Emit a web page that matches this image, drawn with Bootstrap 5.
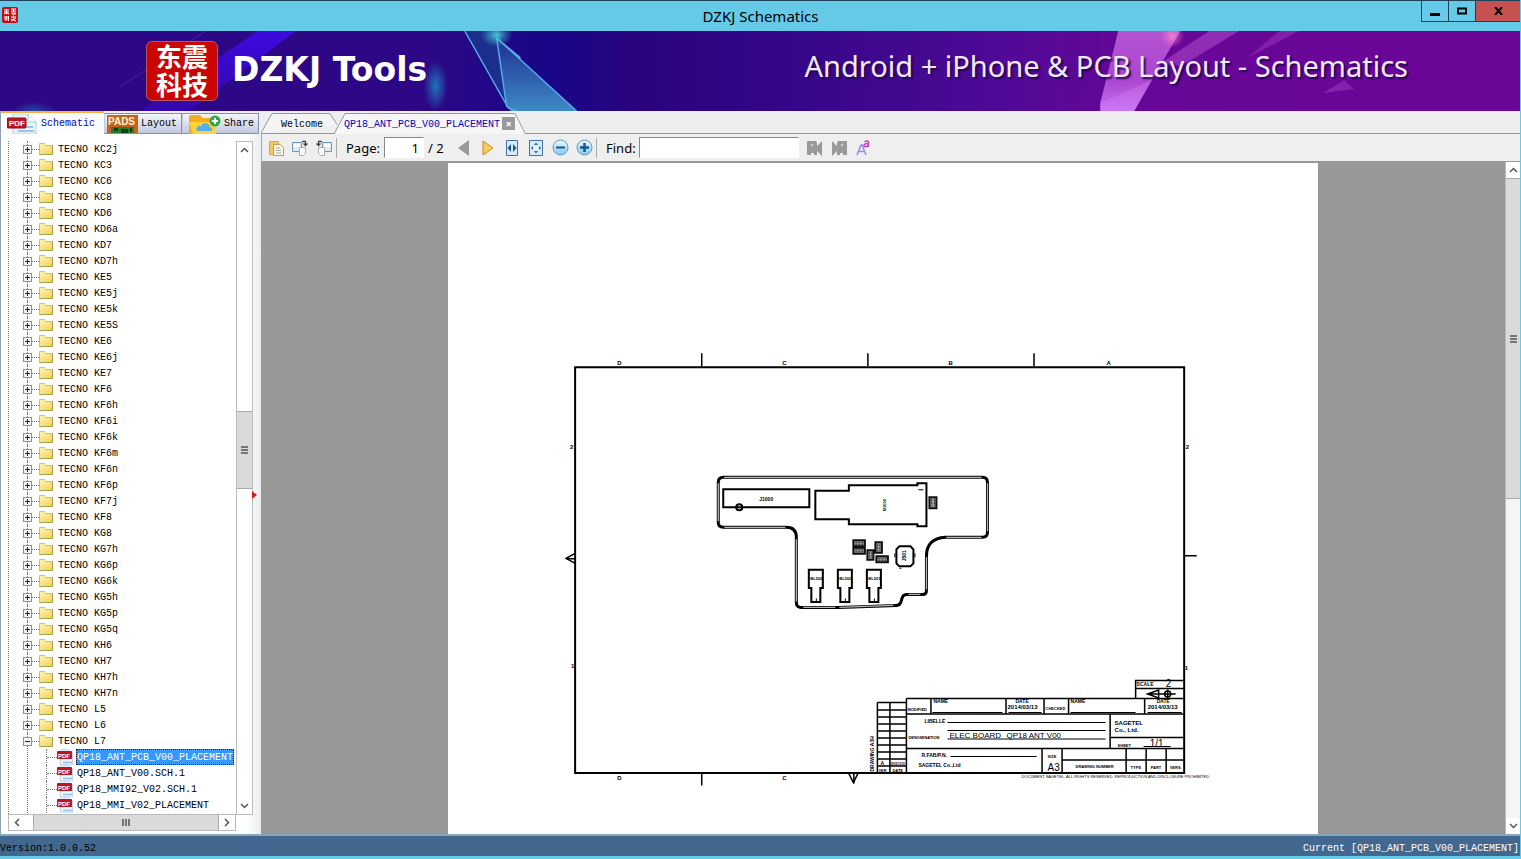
<!DOCTYPE html>
<html lang="en">
<head>
<meta charset="utf-8">
<meta name="viewport" content="width=device-width, initial-scale=1">
<title>DZKJ Schematics</title>
<link href="https://cdn.jsdelivr.net/npm/bootstrap@5.3.0/dist/css/bootstrap.min.css" rel="stylesheet">
<style>
  :root { --sky:#65c9e8; --mono:"Liberation Mono",monospace; --ui:"Noto Sans",sans-serif; }
  body { font:10px/16px var(--mono); color:#000; background:#eee; }
  button { font:inherit; color:inherit; border:0; background:none; padding:0; }
  svg { display:block; flex:none; }
  .app { border-right:1px solid var(--sky); }

  /* window frame */
  .titlebar { height:31px; background:var(--sky); border-top:1px solid #1d4359; margin-right:-1px; font:15px/30px var(--ui); }
  .caption-buttons { top:0; right:0; }
  .caption-buttons button { width:27px; height:21px; border:1px solid #233f4c; border-top:0; border-right:0; display:grid; place-items:center; }
  .caption-buttons .close-window { width:46px; background:#c75050; }

  /* banner */
  .banner { height:80px; background:linear-gradient(90deg,#2d0886 0,#2d0886 28%,#180787 36%,#29047f 42%,#36078a 53%,#500996 66%,#680799 76%,#6a0697 100%); padding:0 112px 0 146px; }
  .banner-art { left:0; top:0; width:100%; height:100%; }
  .brand-logo { width:72px; height:60px; border-radius:6px; background:#cb0504; border:1px solid #b7565b; color:#fff; font:700 26px/28px "Noto Sans CJK SC",sans-serif; }
  .brand-name { font:700 33px/44px "DejaVu Sans",sans-serif; color:#fff; margin:0 0 0 14px; padding-bottom:2px; }
  .slogan { font:29px/40px var(--ui); color:#f4e9fa; text-shadow:2px 2px 2px #22074f; margin:0; padding-bottom:10px; }

  /* sidebar */
  .side { width:261px; border-left:1px solid #8ea3af; }
  .side-tabs { height:23px; padding-top:2px; background:#eee; }
  .side-tabs button { height:21px; border:1px solid #8292ad; border-left-color:#c3cbd9; background:linear-gradient(#f4f5fb,#c3c9df); padding:1px 4px 0 2px; }
  .side-tabs span { margin-left:3px; }
  .side-tabs .current { height:23px; margin-top:-2px; width:103px; background:#fbfcff; border:0; border-top:2px solid #fbb13c; color:#0202b8; }
  .side-body { padding:7px 8px 3px 7px; background:linear-gradient(90deg,#fff 94%,#e9edf0); }
  .splitter-mark { top:51%; right:4px; }
  .tree { border-left:1px dotted #777; background:#fff; overflow:hidden; }
  .tree ul { list-style:none; margin:0; padding:0; }
  .tree-root > li { position:relative; padding-left:14px; }
  .tree-root > li::before { content:""; position:absolute; left:18px; top:0; bottom:0; border-left:1px dotted #777; }
  .node { height:16px; white-space:nowrap; }
  .expander { width:9px; height:9px; border:1px solid #919191; background:#f4f4f4; position:relative; }
  .stub { width:7px; border-top:1px dotted #777; }
  .node a { color:#000; text-decoration:none; margin-left:5px; padding-top:2px; }
  .tree-root ul { margin-left:23px; }
  .tree-root ul .node { border-left:1px dotted #777; }
  .tree-root ul .stub { width:10px; }
  .tree-root ul a { margin-left:3px; padding:0 1px; height:16px; line-height:17px; }
  .tree-root ul a.active { background:#3399ff; color:#fff; outline:1px dotted #222; outline-offset:-1px; }

  /* scroll bars */
  .bar { background:#fff; border:1px solid #bbb; }
  .bar button { display:grid; place-items:center; background:#fff; }
  .bar-v { width:17px; }
  .bar-v button { height:16px; width:100%; }
  .bar-h { height:17px; }
  .bar-h button { width:16px; height:100%; }
  .thumb { background:#dadada; border:1px solid #aaa; display:grid; place-items:center; }
  .bar-v .thumb { border-width:1px 0; } .bar-h .thumb { border-width:0 1px; }
  .doc-bar { width:15px; border-width:0 0 0 1px; background:#f5f5f5; }

  /* document side */
  .doc-tabs { height:23px; padding-top:2px; border-bottom:1px solid #899aa3; }
  .doc-tab { position:relative; height:21px; }
  .doc-tab > svg { position:absolute; left:0; top:0; }
  .doc-tab button { position:relative; line-height:20px; padding-top:2px; }
  .doc-tab .close-tab { width:13px; height:13px; background:#999; color:#fff; font:700 11px/12px var(--ui); margin-left:2px; padding:0; }
  .tools { height:28px; padding-left:2px; border-left:1px solid #aaa; background:#efefef; font:13px/24px var(--ui); border-bottom:1px solid #999; }
  .tools button { width:24px; height:24px; display:grid; place-items:center; }
  .tools .rule { width:1px; height:20px; background:#aaa; }
  .tools input { height:21px; border:1px solid #fff; border-top-color:#888; border-left-color:#888; font:inherit; line-height:18px; padding:0 4px; border-radius:0; background:#fff; }
  .label-page { width:47px; padding-left:9px; } .label-find { width:42px; padding-left:9px; }
  .page-input { width:40px; text-align:right; } .find-input { width:160px; }
  .page-total { width:28px; padding-left:4px; }
  .viewer { background:#989898; padding-top:1px; }
  .sheet { width:70%; background:#fff; }
  .sheet text { font-family:"Liberation Sans",sans-serif; font-weight:700; fill:#000; }
  .t3 { font-size:3px; } .t4 { font-size:4px; } .t5 { font-size:5px; } .t6 { font-size:6px; } .t8 { font-size:8px; } .t10 { font-size:10px; }
  .sheet .thin { font-weight:400; }

  .status { height:25px; margin-right:-1px; background:#426890; border-top:2px solid #8ba7bc; border-bottom:3px solid var(--sky); line-height:26px; padding:0 2px 0 0; }
</style>
</head>
<body>
<svg width="0" height="0" class="position-absolute" aria-hidden="true">
  <defs>
    <linearGradient id="gold" x1="0" y1="0" x2="1" y2="1"><stop offset="0" stop-color="#fff6b0"/><stop offset="1" stop-color="#ecd35c"/></linearGradient>
    <linearGradient id="ball" x1="0" y1="0" x2="0" y2="1"><stop offset="0" stop-color="#eefaff"/><stop offset="1" stop-color="#7dc9f3"/></linearGradient>
    <symbol id="folder" viewBox="0 0 14 12"><path d="M.5.5h5l1 2h7v9H.5z" fill="url(#gold)" stroke="#d9c05a"/><path d="M.5 11.5h13v-9" fill="none" stroke="#b09a48"/></symbol>
    <symbol id="pdf" viewBox="0 0 16 16"><path d="M3.500.5H12l3.500 3.500v12h-12z" fill="#eaf5ff" stroke="#bcd8ee"/><path d="M6 13.500h9" stroke="#9fcdf2" stroke-width="2"/><rect y="2" width="15" height="8" rx="1" fill="#bd1220"/><text x="1" y="9" font-size="6" font-weight="700" font-family="Liberation Sans,sans-serif" fill="#fff">PDF</text></symbol>
    <symbol id="up" viewBox="0 0 9 6"><path d="M1 5l3.500-3.500L8 5" fill="none" stroke="#555" stroke-width="1.500"/></symbol>
    <symbol id="down" viewBox="0 0 9 6"><path d="M1 1l3.500 3.500L8 1" fill="none" stroke="#555" stroke-width="1.500"/></symbol>
    <symbol id="grip" viewBox="0 0 7 8"><path d="M0 1h7M0 4h7M0 7h7" stroke="#555" stroke-width="1.500"/></symbol>
    <symbol id="camera" viewBox="0 0 16 16"><path d="M0 1h9l1 2v3l5-5v15l-5-5v4H7v-2H4v2H0z" fill="#999"/><circle cx="5" cy="5" r="1.200" fill="#ccc"/></symbol>
    <symbol id="rotate" viewBox="0 0 18 16"><path d="M1.500 2.500h9v9h-9z" fill="#d8ecfb" stroke="#7096bc"/><path d="M3 4h6v3H3z" fill="#fff"/><path d="M8.500 7.500h6v6l-2 2h-4z" fill="#fcfcfc" stroke="#aaa"/><path d="M11 1.500h3.500V5M12.500 3.500l2 2 2-2" fill="none" stroke="#444" stroke-width="1.300"/></symbol>
  </defs>
</svg>

<div class="app d-flex flex-column vh-100 overflow-hidden">
  <header class="titlebar position-relative flex-shrink-0 text-center">
    <svg class="position-absolute" style="left:2px;top:6px" width="16" height="16" viewBox="0 0 16 16"><rect width="16" height="16" rx="2" fill="#c80d12"/><path d="M2 3h5M4.500 2v5M2 5h5M2 7l2-1M5 6l2 1M9 2h5M9 4h5M11.500 2v3M9 6h5M10 7h4M2 10h4M4 9v5M2 12h4M6.500 9v5M9 10h5M11.500 8.500v3M9 12l5 2M14 11l-5 3" stroke="#fff" fill="none"/></svg>
    DZKJ Schematics
    <div class="caption-buttons position-absolute d-flex">
      <button aria-label="Minimize"><svg width="10" height="10"><path d="M0 8.500h10" stroke="#000" stroke-width="3"/></svg></button>
      <button aria-label="Maximize"><svg width="10" height="8"><path d="M1 1.500h8v5H1z" fill="none" stroke="#000" stroke-width="2"/></svg></button>
      <button class="close-window" aria-label="Close"><svg width="9" height="8"><path d="M1 0l7 8M8 0L1 8" stroke="#000" stroke-width="2"/></svg></button>
    </div>
  </header>

  <section class="banner position-relative flex-shrink-0 d-flex align-items-center">
    <svg class="banner-art position-absolute" viewBox="0 0 1521 80" preserveAspectRatio="none" aria-hidden="true">
      <defs>
        <radialGradient id="glow"><stop offset="0" stop-color="#1d80bd" stop-opacity=".9"/><stop offset="1" stop-color="#1d80bd" stop-opacity="0"/></radialGradient>
        <radialGradient id="spark"><stop offset="0" stop-color="#4fd6dd" stop-opacity=".9"/><stop offset="1" stop-color="#36b0c4" stop-opacity="0"/></radialGradient>
        <radialGradient id="rose"><stop offset="0" stop-color="#ff8ccf" stop-opacity=".8"/><stop offset="1" stop-color="#f36bc7" stop-opacity="0"/></radialGradient>
        <linearGradient id="ray" x1="0" y1="0" x2="0" y2="1"><stop offset="0" stop-color="#3d0ae0"/><stop offset="1" stop-color="#3d09dd" stop-opacity=".4"/></linearGradient>
        <linearGradient id="shard" x1="0" y1="0" x2="0" y2="1"><stop offset="0" stop-color="#1e2f91"/><stop offset="1" stop-color="#3e89c6"/></linearGradient>
        <linearGradient id="pink" x1="0" y1="0" x2="0" y2="1"><stop offset="0" stop-color="#b455d2"/><stop offset=".6" stop-color="#ac45d0"/><stop offset="1" stop-color="#c66ff0"/></linearGradient>
      </defs>
      <path d="M258 0h38L190 80h-50z" fill="url(#ray)"/>
      <path d="M206 0L120 56" stroke="#5540c0" opacity=".5"/>
      <ellipse cx="34" cy="80" rx="22" ry="9" fill="url(#glow)" opacity=".6"/>
      <ellipse cx="436" cy="55" rx="12" ry="25" fill="url(#glow)"/>
      <path d="M465 0h35l7 78L518 80h-8z" fill="#1c2f8f"/>
      <path d="M497 7L577 80h-66l-4-4z" fill="url(#shard)"/>
      <path d="M465 0l43 76 8 4M497 7l10 69M497 7l80 73M497 7l24 20" fill="none" stroke="#58a9e8" stroke-width="1.500"/>
      <ellipse cx="497" cy="4" rx="16" ry="12" fill="url(#spark)"/>
      <path d="M1119 0h62l-46 80h-34v-8z" fill="url(#pink)"/>
      <path d="M1101 72l40-18 12-6-18 32h-34z" fill="#d489fa" opacity=".3"/>
      <path d="M1210 0h30l-58 35-22-2z" fill="#a13cc0" opacity=".7"/>
      <path d="M1280 0h20l-52 27z" fill="#9b36bc" opacity=".5"/>
      <path d="M1345 49l10 9-31 4z" fill="#8e2fb2" opacity=".7"/>
      <ellipse cx="1173" cy="5" rx="12" ry="12" fill="url(#rose)"/>
    </svg>
    <div class="brand-logo position-relative text-center">东震<br>科技</div>
    <h1 class="brand-name position-relative">DZKJ Tools</h1>
    <p class="slogan position-relative ms-auto">Android + iPhone &amp; PCB Layout - Schematics</p>
  </section>

  <main class="d-flex flex-grow-1 overflow-hidden">
    <aside class="side d-flex flex-column flex-shrink-0">
      <nav class="side-tabs d-flex flex-shrink-0">
        <button class="current d-flex align-items-center"><svg class="ms-1 me-1" width="30" height="20" viewBox="2 0 30 20"><path d="M8 0h15l8 8v12H8z" fill="#e8f3fc" stroke="#b7cfe0"/><path d="M23 0v8h8" fill="#fff" stroke="#8db"/><path d="M11 13h17M13 17h16" stroke="#8fc8ea" stroke-width="2"/><rect x="2" y="4" width="19" height="10" rx="1" fill="#bd1622" stroke="#85111a"/><text x="4" y="12" font-size="8" font-weight="700" font-family="Liberation Sans,sans-serif" fill="#fff">PDF</text></svg>Schematic</button>
        <button class="d-flex align-items-center"><svg width="31" height="18" viewBox="0 0 31 18"><rect width="31" height="18" fill="#c4641b"/><path d="M4 12h23v6H4z" fill="#287c28"/><path d="M7 13h4v3H7zM14 14h7v4h-7zM23 13h2v4h-2z" fill="#123f18"/><text x="1" y="10" font-size="10" font-weight="700" font-family="Liberation Sans,sans-serif" fill="#fff4d8">PADS</text></svg><span>Layout</span></button>
        <button class="d-flex align-items-center"><svg class="ms-1" width="32" height="19" viewBox="0 0 32 19"><path d="M0 2q0-2 2-2h9l3 3h10q3 0 3 3v13H0z" fill="#f6ac21"/><path d="M0 7h27v12H4z" fill="#ffd23c"/><path d="M9 16q-3-1-1-4 2-2 4-1 2-5 7-2 2 1 2 3 4 1 1 4z" fill="#57aee8"/><circle cx="26" cy="6" r="5.500" fill="#36a84a"/><path d="M23 6h6M26 3v6" stroke="#fff" stroke-width="2"/></svg><span>Share</span></button>
      </nav>
      <div class="side-body d-flex flex-grow-1 overflow-hidden position-relative">
        <div class="d-flex flex-column flex-grow-1 overflow-hidden">
          <div class="tree flex-grow-1"><ul class="tree-root" id="tree"></ul></div>
          <div class="bar bar-h d-flex flex-shrink-0">
            <button aria-label="Scroll left"><svg width="6" height="9"><path d="M5 1L1.500 4.500 5 8" fill="none" stroke="#555" stroke-width="1.500"/></svg></button>
            <div class="thumb flex-grow-1 ms-2"><svg width="8" height="7"><path d="M1 0v7M4 0v7M7 0v7" stroke="#555" stroke-width="1.500"/></svg></div>
            <button aria-label="Scroll right"><svg width="6" height="9"><path d="M1 1l3.500 3.500L1 8" fill="none" stroke="#555" stroke-width="1.500"/></svg></button>
          </div>
        </div>
        <div class="bar bar-v d-flex flex-column mb-3">
          <button aria-label="Scroll up"><svg width="9" height="6"><use href="#up"/></svg></button>
          <div style="flex:254"></div>
          <div class="thumb" style="flex:77"><svg width="7" height="8"><use href="#grip"/></svg></div>
          <div style="flex:310"></div>
          <button aria-label="Scroll down"><svg width="9" height="6"><use href="#down"/></svg></button>
        </div>
        <svg class="splitter-mark position-absolute" width="5" height="8"><path d="M0 0l5 4-5 4z" fill="#d61a1a"/></svg>
      </div>
    </aside>

    <section class="d-flex flex-column flex-grow-1 overflow-hidden">
      <nav class="doc-tabs d-flex flex-shrink-0">
        <div class="doc-tab" style="width:73px"><svg width="77" height="21"><path d="M0 20L11 .5h58l7 11" fill="#f4f4f4" stroke="#899aa3"/></svg><button style="padding-left:20px">Welcome</button></div>
        <div class="doc-tab d-flex align-items-center" style="padding-left:10px"><svg width="192" height="22"><path d="M0 21L11 .5h170L191.500 21" fill="#f6f6f6" stroke="#899aa3"/></svg><button style="color:#0202b8">QP18_ANT_PCB_V00_PLACEMENT</button><button class="close-tab" aria-label="Close tab">×</button></div>
      </nav>
      <div class="tools d-flex align-items-center flex-shrink-0">
        <button aria-label="Open"><svg width="15" height="16"><path d="M.5 1.500h9v13h-9z" fill="#f4c869" stroke="#d7a44a"/><path d="M4.500 4.500h7l3 3v8h-10z" fill="#fff5dc" stroke="#b99d6f"/><path d="M7 8h4M7 10.500h5M7 13h5" stroke="#a5a5a5"/></svg></button>
        <button aria-label="Rotate right"><svg width="18" height="16"><use href="#rotate"/></svg></button>
        <button aria-label="Rotate left"><svg width="18" height="16"><g transform="matrix(-1 0 0 1 18 0)"><use href="#rotate" width="18" height="16"/></g></svg></button>
        <span class="rule"></span>
        <label class="label-page" for="page">Page:</label><input class="page-input" id="page" value="1"><span class="page-total">/ 2</span>
        <button aria-label="Previous page"><svg width="12" height="16"><path d="M11 0v16L0 8z" fill="#999"/></svg></button>
        <button aria-label="Next page"><svg width="12" height="16"><path d="M1 1v14L11 8z" fill="#f7cd5b" stroke="#c58d24"/></svg></button>
        <button aria-label="Fit width"><svg width="12" height="16"><path d="M.5.5h11v15H.5z" fill="#d3ebfd" stroke="#496f9e"/><path d="M5 4v8L1.500 8zM7 4v8l3.500-4z" fill="#1c538d"/></svg></button>
        <button aria-label="Fit page"><svg width="14" height="16"><path d="M.5.5h13v15H.5z" fill="#d3ebfd" stroke="#496f9e"/><path d="M5 5l2-2.500L9 5zM5 11l2 2.500L9 11zM4 6L2 8l2 2zM10 6l2 2-2 2z" fill="#32679f"/><rect x="4.500" y="5.500" width="5" height="5" fill="#e9f6ff"/></svg></button>
        <button aria-label="Zoom out"><svg width="17" height="17"><circle cx="8.500" cy="8.500" r="7.500" fill="url(#ball)" stroke="#6896b8"/><path d="M4 8.500h9" stroke="#155a92" stroke-width="2"/></svg></button>
        <button aria-label="Zoom in"><svg width="17" height="17"><circle cx="8.500" cy="8.500" r="7.500" fill="url(#ball)" stroke="#6896b8"/><path d="M4 8.500h9M8.500 4v9" stroke="#155a92" stroke-width="2.500"/></svg></button>
        <span class="rule"></span>
        <label class="label-find" for="find">Find:</label><input class="find-input me-1" id="find">
        <button aria-label="Find previous"><svg width="16" height="16"><use href="#camera"/></svg></button>
        <button aria-label="Find next"><svg width="16" height="16"><g transform="matrix(-1 0 0 1 16 0)"><use href="#camera" width="16" height="16"/></g></svg></button>
        <button aria-label="Match case"><svg width="14" height="16"><path d="M1 15L5 5h1l4 10M2.500 11.500h6" fill="none" stroke="#9c86f2" stroke-width="1.500"/><path d="M8.500 2q3-2 4 0v5M12 3.500q-4 0-4 2t4 .5" fill="none" stroke="#c043b4" stroke-width="1.500"/></svg></button>
      </div>
      <div class="d-flex flex-grow-1 overflow-hidden">
        <div class="viewer flex-grow-1 d-flex justify-content-center overflow-hidden">
          <svg class="sheet h-100" viewBox="448 163 870 671" preserveAspectRatio="xMidYMin slice" role="img" aria-label="QP18 antenna board placement">
            <g fill="none" stroke="#000">
              <g stroke-width="2">
                <path d="M575 367h608.500v405.500H575z"/>
                <path d="M848.500 773l4.500 9 4.500-9M575 553l-9 5 9 5" stroke-width="1.500"/>
              </g>
              <path d="M701.500 353v13M867.500 353v13M1033.500 353v13M701.500 773v12M853.500 773v10M1184 555.500h12M566 558.500h9" stroke-width="1.500"/>
              <path d="M718 482Q718 477 723 477H982Q987 477 987 482V532Q987 537 982 537H945Q926 538 926 556V590Q926 594 922 594H906Q902 594 901 600Q900 605 896 605L838 607H801Q796 607 796 602V537Q796 527 786 527H723Q718 527 718 522Z" stroke-width="3"/>
              <path d="M724 477H981M987 483v48M981 537H946M926 557v32M920 594h-12M893 605l-54 2M835 607H803M796 601v-62M785 527H724M718 521v-38" stroke="#b4b4b4" stroke-width="1.300"/>
              <g stroke-width="2">
                <path d="M723 489h86v18h-86z"/><circle cx="739" cy="507" r="3"/>
                <path d="M815 490.500h33.500V485H917V483h9v43h-9v-2h-68.500v-5H815z"/>
                <path d="M808.500 569.500h14v18h-2.500v14h-9v-14h-2.500zM837.500 569.500h14v18h-2.500v14h-9v-14h-2.500zM866.500 569.500h14v18h-2.500v14h-9v-14h-2.500z"/>
                <path d="M899 546h11l3 3v14l-3 3h-11l-3-3v-14z"/>
              </g>
              <path d="M918 489.500h5M816 598v3M845 598v3M874 598v3M894.500 553v4M914.500 553v4M899 568h2"/>
            </g>
            <g fill="#999" stroke="#111" stroke-width="2"><path d="M929 497h7v11h-7zM853 540h11.500v6H853zM853 547.500h11.500v6H853zM867 550h6v9.500h-6zM875 542h6.500v10.500H875zM876 556h11.500v6H876z"/></g>
            <g fill="none" stroke="#333"><path d="M931 499v7M934 499v7M855 542h8M855 544h8M855 549.500h8M855 551.500h8M869 552v6M871.500 552v6M877 544v7M879.500 544v7M878 558h8M878 560h8" stroke-dasharray="2 1"/></g>
            <g class="t5">
              <text x="759" y="501">J1000</text><text x="810" y="580" class="t4">BL502</text><text x="839" y="580" class="t4">BL500</text><text x="868" y="580" class="t4">BL501</text>
              <text transform="rotate(-90 886 511)" x="886" y="511" class="t4">M1000</text><text transform="rotate(-90 906 561)" x="906" y="561">J501</text>
            </g>
            <g class="t6">
              <text x="617" y="365">D</text><text x="782" y="365">C</text><text x="948" y="365">B</text><text x="1106" y="365">A</text>
              <text x="617" y="779">D</text><text x="782" y="779">C</text>
              <text x="570" y="449">2</text><text x="1185" y="449">2</text><text x="571" y="668">1</text><text x="1184" y="670">1</text>
            </g>
            <g fill="none" stroke="#000" stroke-width="1.500">
              <path d="M1182.500 680H1135v18M1135 688h48M906 698h277M906 698v74M906 713.500h277M906 748h277M930.500 698v15M1005.500 698v15M1043.500 698v15M1068 698v15M1144 698v15M1109.500 713v35M1109 737h74M1041.500 748v24M1061.500 748v24M1061 759.500h122M1125.500 748v24M1145.500 748v24M1165.500 748v24"/>
              <path d="M877 702v70M889.500 702v70M877 702h29M877 709.500h29M877 716.500h29M877 723.500h29M877 730.500h29M877 737.500h29M877 744.500h29M877 751.500h29M877 758.500h29M877 765.500h29"/>
              <path d="M932 712h70M1008 712h33M1070 712h65M1147 712h34M947 722h158M947 730h158M947 738.500h158M950 756h86M1143 746h27" stroke-width="1"/>
              <path d="M1147 693.500l11-4v8zM1146 693.500h29M1167 689v9"/><circle cx="1167" cy="693.500" r="3"/>
            </g>
            <g class="t5">
              <text x="1136" y="686">SCALE</text><text x="1165" y="687" class="t10 thin">2</text>
              <text x="907" y="711" class="t4">MODIFIED</text><text x="933" y="703">NAME</text><text x="1015" y="703">DATE</text><text x="1007" y="709" class="t6">2014/03/13</text><text x="1045" y="710" class="t4">CHECKED</text><text x="1070" y="703">NAME</text><text x="1156" y="703">DATE</text><text x="1147" y="709" class="t6">2014/03/13</text>
              <text x="924" y="722">LIBELLE</text><text x="908" y="738" class="t4">DENOMINATION</text>
              <text x="949" y="737" class="t8 thin">ELEC BOARD</text><text x="1006" y="737" class="t8 thin">QP18 ANT V00</text>
              <text x="1114" y="724" class="t6">SAGETEL</text><text x="1114" y="731" class="t6">Co., Ltd.</text><text x="1117" y="746" class="t4">SHEET</text><text x="1149" y="746" class="t10 thin">1/1</text>
              <text x="921" y="756">R.FAB/P.N.</text><text x="918" y="766" class="t5">SAGETEL Co.,Ltd</text><text x="1047" y="757" class="t4">SIZE</text><text x="1047" y="770" class="t10 thin">A3</text>
              <text x="1075" y="767" class="t4">DRAWING NUMBER</text><text x="1130" y="768" class="t4">TYPE</text><text x="1150" y="768" class="t4">PART</text><text x="1169" y="768" class="t4">VERS.</text>
              <text x="880" y="764">A</text><text x="890" y="764" class="t3">2005/11/21</text><text x="878" y="771" class="t4">VER</text><text x="892" y="771" class="t4">DATE</text>
              <text transform="rotate(-90 874 771)" x="874" y="771">DRAWING A3H</text>
              <text x="1021" y="777" class="t4 thin">DOCUMENT SAGETEL. ALL RIGHTS RESERVED. REPRODUCTION AND DISCLOSURE PROHIBITED</text>
            </g>
          </svg>
        </div>
        <div class="bar bar-v doc-bar d-flex flex-column flex-shrink-0">
          <button aria-label="Scroll up"><svg width="9" height="6"><use href="#up"/></svg></button>
          <div class="thumb" style="flex:321"><svg width="7" height="8"><use href="#grip"/></svg></div>
          <div style="flex:321"></div>
          <button aria-label="Scroll down"><svg width="9" height="6"><use href="#down"/></svg></button>
        </div>
      </div>
    </section>
  </main>

  <footer class="status d-flex justify-content-between flex-shrink-0"><span>Version:1.0.0.52</span><span class="text-white">Current [QP18_ANT_PCB_V00_PLACEMENT]</span></footer>
</div>

<script src="https://cdn.jsdelivr.net/npm/bootstrap@5.3.0/dist/js/bootstrap.bundle.min.js"></script>
<script>
  const models = 'KC2j KC3 KC6 KC8 KD6 KD6a KD7 KD7h KE5 KE5j KE5k KE5S KE6 KE6j KE7 KF6 KF6h KF6i KF6k KF6m KF6n KF6p KF7j KF8 KG8 KG7h KG6p KG6k KG5h KG5p KG5q KH6 KH7 KH7h KH7n L5 L6 L7'.split(' ');
  const files = { L7: ['QP18_ANT_PCB_V00_PLACEMENT', 'QP18_ANT_V00.SCH.1', 'QP18_MMI92_V02.SCH.1', 'QP18_MMI_V02_PLACEMENT'] };
  const leaf = (name, i) => `<li class="node d-flex align-items-center"><span class="stub"></span><svg width="16" height="16"><use href="#pdf"/></svg><a href="#" class="${i ? '' : 'active'}">${name}</a></li>`;
  document.getElementById('tree').innerHTML = models.map(m => {
    const open = files[m];
    return `<li><div class="node d-flex align-items-center"><button class="expander" aria-label="Toggle ${m}"><svg width="7" height="7"><path d="M1 3.500h5${open ? '' : 'M3.500 1v5'}" stroke="#222"/></svg></button><span class="stub"></span><svg width="14" height="12"><use href="#folder"/></svg><a href="#">TECNO ${m}</a></div>${open ? `<ul>${open.map(leaf).join('')}</ul>` : ''}</li>`;
  }).join('');
</script>
</body>
</html>
